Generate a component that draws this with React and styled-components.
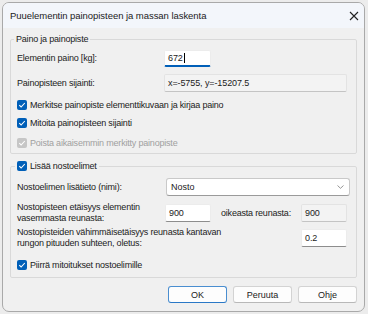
import React from "react";
import styled, { createGlobalStyle } from "styled-components";

const GlobalStyle = createGlobalStyle`
	html, body {
		margin: 0;
		padding: 0;
		background: #ececec;
	}
	body {
		font-family: "Liberation Sans", Arial, sans-serif;
		color: #1b1b1b;
	}
`;

const Dialog = styled.div`
	margin: 2px 0 0 2px;
	width: 363px;
	height: 310px;
	box-sizing: border-box;
	border: 1px solid #a9a9a9;
	border-radius: 7px;
	background: #f0f0f0;
	overflow: hidden;
	display: flex;
	flex-direction: column;
`;

const TitleBar = styled.div`
	height: 25px;
	flex: none;
	background: #f3f6fb;
	display: flex;
	align-items: center;
	justify-content: space-between;
	padding: 0 5px 0 7px;
`;

const Title = styled.div`
	font-size: 9.5px;
	letter-spacing: -0.05px;
`;

const Body = styled.div`
	padding: 4px 7px 0 7px;
	display: flex;
	flex-direction: column;
`;

const Group = styled.fieldset`
	margin: ${(p) => p.$top || 0}px 0 0 0;
	padding: 0;
	min-width: 0;
	border: 1px solid #d9d9d9;
	border-radius: 2px;
`;

const Legend = styled.legend`
	margin-left: ${(p) => p.$indent || 3}px;
	padding: 0 2px;
	height: 14px;
	display: flex;
	align-items: center;
	font-size: 9px;
	letter-spacing: -0.2px;
`;

const GroupContent = styled.div`
	padding: ${(p) => p.$pad};
	display: flex;
	flex-direction: column;
`;

const Row = styled.div`
	display: flex;
	align-items: center;
	margin-top: ${(p) => p.$top || 0}px;
	min-height: ${(p) => p.$h || 0}px;
`;

const Label = styled.div`
	flex: none;
	width: ${(p) => p.$w}px;
	margin-left: ${(p) => p.$left || 0}px;
	font-size: 9px;
	line-height: 11px;
	letter-spacing: -0.2px;
	color: #1b1b1b;
`;

const TextBox = styled.div`
	flex: ${(p) => (p.$w ? "none" : "1")};
	width: ${(p) => (p.$w ? `${p.$w}px` : "auto")};
	height: ${(p) => p.$h || 18}px;
	box-sizing: border-box;
	display: flex;
	align-items: center;
	padding-left: 3px;
	font-size: 9px;
	letter-spacing: -0.1px;
	background: ${(p) => (p.$readonly ? "#f3f3f3" : "#ffffff")};
	border: 1px solid ${(p) => (p.$readonly ? "#e3e3e3" : "#ececec")};
	border-bottom: ${(p) =>
		p.$focused ? "2px solid #005fb8" : p.$readonly ? "1px solid #c4c4c4" : "1px solid #8d8d8d"};
	border-radius: 2px;
`;

const Caret = styled.span`
	display: inline-block;
	width: 1px;
	height: 10px;
	margin-left: 1px;
	background: #000;
`;

const SelectBox = styled.div`
	flex: none;
	width: 184px;
	height: 18px;
	box-sizing: border-box;
	display: flex;
	align-items: center;
	justify-content: space-between;
	padding: 0 5px 0 4px;
	font-size: 9px;
	background: #fff;
	border: 1px solid #c9c9c9;
	border-bottom-color: #9a9a9a;
	border-radius: 3px;
`;

const CheckRow = styled.label`
	display: flex;
	align-items: center;
	height: 14px;
	margin-top: ${(p) => p.$top || 0}px;
	font-size: 9px;
	letter-spacing: -0.2px;
	color: ${(p) => (p.$disabled ? "#a0a0a0" : "#1b1b1b")};
`;

const Box = styled.span`
	flex: none;
	width: 10px;
	height: 10px;
	margin-right: 3px;
	border-radius: 2px;
	background: ${(p) => (p.$disabled ? "#c6c6c6" : "#005fb8")};
	display: flex;
	align-items: center;
	justify-content: center;
`;

const Buttons = styled.div`
	display: flex;
	justify-content: flex-end;
	gap: 6px;
	margin-top: 8px;
`;

const Button = styled.button`
	width: 59px;
	height: 17px;
	padding: 0;
	font-family: inherit;
	font-size: 9px;
	color: #1b1b1b;
	background: #fdfdfd;
	border: 1px solid ${(p) => (p.$primary ? "#4a8ed0" : "#d3d3d3")};
	border-bottom-color: ${(p) => (p.$primary ? "#2a78c6" : "#b8b8b8")};
	border-radius: 3px;
`;

function Check({ disabled }) {
	return (
		<Box $disabled={disabled}>
			<svg width="8" height="8" viewBox="0 0 8 8">
				<path d="M1.3 4.2 L3.1 6 L6.8 2" fill="none" stroke="#fff" strokeWidth="1.1" />
			</svg>
		</Box>
	);
}

export default function App() {
	return (
		<>
			<GlobalStyle />
			<Dialog>
				<TitleBar>
					<Title>Puuelementin painopisteen ja massan laskenta</Title>
					<svg width="10" height="10" viewBox="0 0 10 10">
						<path d="M1 1 L9 9 M9 1 L1 9" stroke="#222" strokeWidth="1.1" />
					</svg>
				</TitleBar>
				<Body>
					<Group>
						<Legend>Paino ja painopiste</Legend>
						<GroupContent $pad="4px 9px 3px 6px">
							<Row $h={17}>
								<Label $w={147}>Elementin paino [kg]:</Label>
								<TextBox $w={47} $h={17} $focused>
									672
									<Caret />
								</TextBox>
							</Row>
							<Row $top={7} $h={18}>
								<Label $w={147}>Painopisteen sijainti:</Label>
								<TextBox $readonly>x=-5755, y=-15207.5</TextBox>
							</Row>
							<CheckRow $top={6}>
								<Check />
								Merkitse painopiste elementtikuvaan ja kirjaa paino
							</CheckRow>
							<CheckRow $top={4}>
								<Check />
								Mitoita painopisteen sijainti
							</CheckRow>
							<CheckRow $top={6} $disabled>
								<Check disabled />
								Poista aikaisemmin merkitty painopiste
							</CheckRow>
						</GroupContent>
					</Group>
					<Group $top={5}>
						<Legend $indent={4}>
							<Check />
							Lisää nostoelimet
						</Legend>
						<GroupContent $pad="5px 7px 5px 6px">
							<Row $h={18}>
								<Label $w={149}>Nostoelimen lisätieto (nimi):</Label>
								<SelectBox>
									Nosto
									<svg width="7" height="4" viewBox="0 0 7 4">
										<path d="M0.5 0.5 L3.5 3.3 L6.5 0.5" fill="none" stroke="#8a8a8a" strokeWidth="0.9" />
									</svg>
								</SelectBox>
							</Row>
							<Row $top={6}>
								<Label $w={148}>
									Nostopisteen etäisyys elementin
									<br />
									vasemmasta reunasta:
								</Label>
								<TextBox $w={46}>900</TextBox>
								<Label $w={80} $left={10}>oikeasta reunasta:</Label>
								<TextBox $w={46} $readonly>900</TextBox>
							</Row>
							<Row $top={3}>
								<Label $w={284}>
									Nostopisteiden vähimmäisetäisyys reunasta kantavan
									<br />
									rungon pituuden suhteen, oletus:
								</Label>
								<TextBox $w={46}>0.2</TextBox>
							</Row>
							<CheckRow $top={9}>
								<Check />
								Piirrä mitoitukset nostoelimille
							</CheckRow>
						</GroupContent>
					</Group>
					<Buttons>
						<Button $primary>OK</Button>
						<Button>Peruuta</Button>
						<Button>Ohje</Button>
					</Buttons>
				</Body>
			</Dialog>
		</>
	);
}
